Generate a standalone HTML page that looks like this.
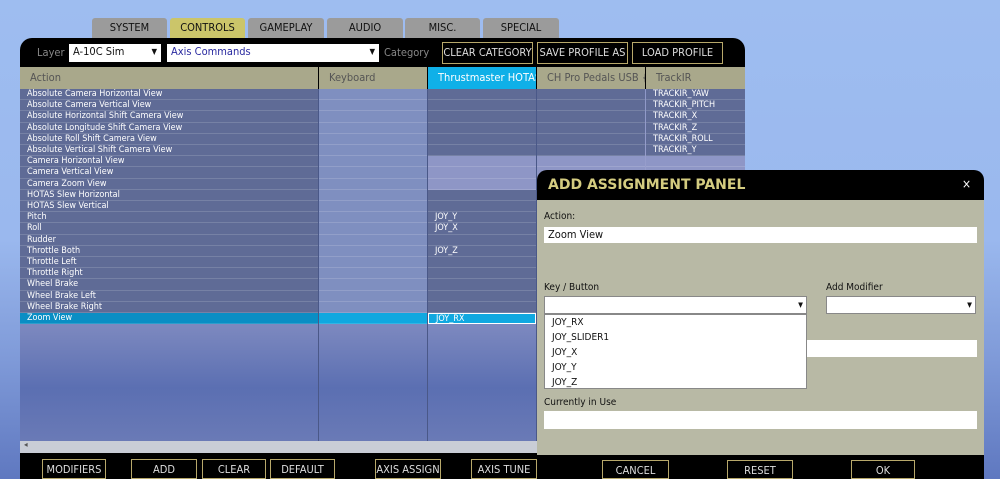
<!DOCTYPE html><html><head><style>
*{margin:0;padding:0;box-sizing:border-box}
html,body{width:1000px;height:479px;overflow:hidden}
body{position:relative;font-family:"DejaVu Sans Condensed","DejaVu Sans","Liberation Sans",sans-serif;background:linear-gradient(180deg,#9ebdf0 0%,#9ab8ee 50%,#7f9ad8 75%,#5f78c0 100%)}
.a{position:absolute}
.tab{position:absolute;top:18px;height:20px;background:#9b9b9b;color:#111;font-size:11px;text-align:center;line-height:20px;border-radius:3px 3px 0 0}
.btn{position:absolute;border:1px solid #b7a86a;color:#ddd;font-size:11px;text-align:center;background:#000;white-space:nowrap;overflow:hidden}
.row{position:absolute;left:20px;width:725px;height:11.2px;font-size:9px;color:#fff;line-height:11px;white-space:nowrap}
.c{position:absolute;top:0;height:100%;border-bottom:1px solid rgba(255,255,255,.15);overflow:hidden}
.hd{position:absolute;top:67px;height:22px;background:#a9a88b;color:#555;font-size:11px;line-height:22px;padding-left:10px;white-space:nowrap;overflow:hidden}
.inp{position:absolute;background:#fff;border:1px solid #888;font-size:11px;color:#111;padding-left:4px;line-height:16px}
.lbl{position:absolute;font-size:10px;color:#111}
</style></head><body>
<div class="tab" style="left:92px;width:75px">SYSTEM</div>
<div class="tab" style="left:170px;width:75px;background:#cbc56a">CONTROLS</div>
<div class="tab" style="left:248px;width:76px">GAMEPLAY</div>
<div class="tab" style="left:327px;width:76px">AUDIO</div>
<div class="tab" style="left:405px;width:75px">MISC.</div>
<div class="tab" style="left:483px;width:76px">SPECIAL</div>
<div class="a" style="left:20px;top:38px;width:725px;height:441px;background:#000;border-radius:12px 12px 0 0"></div>
<div class="a" style="left:37px;top:46px;font-size:11px;color:#888">Layer</div>
<div class="inp" style="left:69px;top:44px;width:92px;height:18px;border:none">A-10C Sim<span style="position:absolute;right:4px;font-size:8px">▼</span></div>
<div class="inp" style="left:167px;top:44px;width:212px;height:18px;border:none;color:#2a2aa0">Axis Commands<span style="position:absolute;right:4px;font-size:8px;color:#111">▼</span></div>
<div class="a" style="left:384px;top:46px;font-size:11px;color:#888">Category</div>
<div class="btn" style="left:442px;top:42px;width:91px;height:22px;line-height:20px">CLEAR CATEGORY</div>
<div class="btn" style="left:537px;top:42px;width:91px;height:22px;line-height:20px">SAVE PROFILE AS</div>
<div class="btn" style="left:632px;top:42px;width:91px;height:22px;line-height:20px">LOAD PROFILE</div>
<div class="a" style="left:20px;top:89px;width:725px;height:352px;background:linear-gradient(180deg,#8e98c8 0%,#9a9fcc 30%,#8a93c4 60%,#5b6fb2 85%,#6a7ab6 100%)"></div>
<div class="a" style="left:318px;top:89px;width:1px;height:352px;background:#4a5888"></div>
<div class="a" style="left:427px;top:89px;width:1px;height:352px;background:#4a5888"></div>
<div class="a" style="left:536px;top:89px;width:1px;height:352px;background:#4a5888"></div>
<div class="hd" style="left:20px;width:298px">Action</div>
<div class="hd" style="left:319px;width:108px">Keyboard</div>
<div class="hd" style="left:428px;width:108px;background:#0fb0e8;color:#fff">Thrustmaster HOTAS</div>
<div class="hd" style="left:537px;width:108px">CH Pro Pedals USB {</div>
<div class="hd" style="left:646px;width:99px">TrackIR</div>
<div id="rows"></div>
<div class="a" style="left:20px;top:441px;width:725px;height:12px;background:#c9cdd6"><span style="position:absolute;left:4px;top:-1px;font-size:8px;color:#555">◂</span></div>
<div class="btn" style="left:42px;top:459px;width:64px;height:20px;line-height:20px">MODIFIERS</div>
<div class="btn" style="left:131px;top:459px;width:66px;height:20px;line-height:20px">ADD</div>
<div class="btn" style="left:202px;top:459px;width:64px;height:20px;line-height:20px">CLEAR</div>
<div class="btn" style="left:270px;top:459px;width:65px;height:20px;line-height:20px">DEFAULT</div>
<div class="btn" style="left:375px;top:459px;width:66px;height:20px;line-height:20px">AXIS ASSIGN</div>
<div class="btn" style="left:471px;top:459px;width:66px;height:20px;line-height:20px">AXIS TUNE</div>
<div class="a" style="left:537px;top:170px;width:447px;height:309px;background:#000;border-radius:10px 10px 0 0"></div>
<div class="a" style="left:548px;top:177px;font-size:14px;font-weight:bold;color:#d4cc80;font-family:'DejaVu Sans',sans-serif">ADD ASSIGNMENT PANEL</div>
<div class="a" style="left:962px;top:177px;font-size:12px;color:#fff">×</div>
<div class="a" style="left:537px;top:200px;width:447px;height:255px;background:#b8b9a5"></div>
<div class="lbl" style="left:544px;top:211px">Action:</div>
<div class="inp" style="left:544px;top:227px;width:433px;height:16px;border:none;line-height:16px">Zoom View</div>
<div class="lbl" style="left:544px;top:282px">Key / Button</div>
<div class="inp" style="left:544px;top:296px;width:263px;height:18px"><span style="position:absolute;right:3px;font-size:7px">▼</span></div>
<div class="lbl" style="left:826px;top:282px">Add Modifier</div>
<div class="inp" style="left:826px;top:296px;width:150px;height:18px"><span style="position:absolute;right:3px;font-size:7px">▼</span></div>
<div class="inp" style="left:806px;top:340px;width:171px;height:17px;border:none"></div>
<div class="inp" style="left:544px;top:314px;width:263px;height:75px;font-size:10px;line-height:15px;padding:0 0 0 7px">JOY_RX<br>JOY_SLIDER1<br>JOY_X<br>JOY_Y<br>JOY_Z</div>
<div class="lbl" style="left:544px;top:397px">Currently in Use</div>
<div class="inp" style="left:544px;top:411px;width:433px;height:18px;border:none"></div>
<div class="btn" style="left:602px;top:460px;width:67px;height:19px;line-height:20px">CANCEL</div>
<div class="btn" style="left:727px;top:460px;width:66px;height:19px;line-height:20px">RESET</div>
<div class="btn" style="left:851px;top:460px;width:64px;height:19px;line-height:20px">OK</div>
<script>
var names=["Absolute Camera Horizontal View","Absolute Camera Vertical View","Absolute Horizontal Shift Camera View","Absolute Longitude Shift Camera View","Absolute Roll Shift Camera View","Absolute Vertical Shift Camera View","Camera Horizontal View","Camera Vertical View","Camera Zoom View","HOTAS Slew Horizontal","HOTAS Slew Vertical","Pitch","Roll","Rudder","Throttle Both","Throttle Left","Throttle Right","Wheel Brake","Wheel Brake Left","Wheel Brake Right","Zoom View"];
var tm={11:"JOY_Y",12:"JOY_X",14:"JOY_Z",20:"JOY_RX"};
var tr=["TRACKIR_YAW","TRACKIR_PITCH","TRACKIR_X","TRACKIR_Z","TRACKIR_ROLL","TRACKIR_Y"];
var h="";
for(var i=0;i<21;i++){var t=89+i*11.2;var sel=i==20;
var ac=sel?"#0a8ec4":"#5f6b96",kb=sel?"#10a8e0":"#7f8fc0",ot=sel?"#10a8e0":(i<6||(i>8&&i<20)?"#5f6b96":"#8e96c6");
h+='<div class="row" style="top:'+t+'px">'+
'<div class="c" style="left:0;width:298px;background:'+ac+';padding-left:7px">'+names[i]+'</div>'+
'<div class="c" style="left:299px;width:108px;background:'+kb+'"></div>'+
'<div class="c" style="left:408px;width:108px;background:'+ot+';padding-left:7px;'+(sel?'border:1px solid #fff;':'')+'">'+(tm[i]||"")+'</div>'+
'<div class="c" style="left:517px;width:108px;background:'+ot+'"></div>'+
'<div class="c" style="left:626px;width:99px;background:'+ot+';padding-left:7px">'+(tr[i]||"")+'</div></div>';}
document.getElementById("rows").innerHTML=h;
</script>
</body></html>
